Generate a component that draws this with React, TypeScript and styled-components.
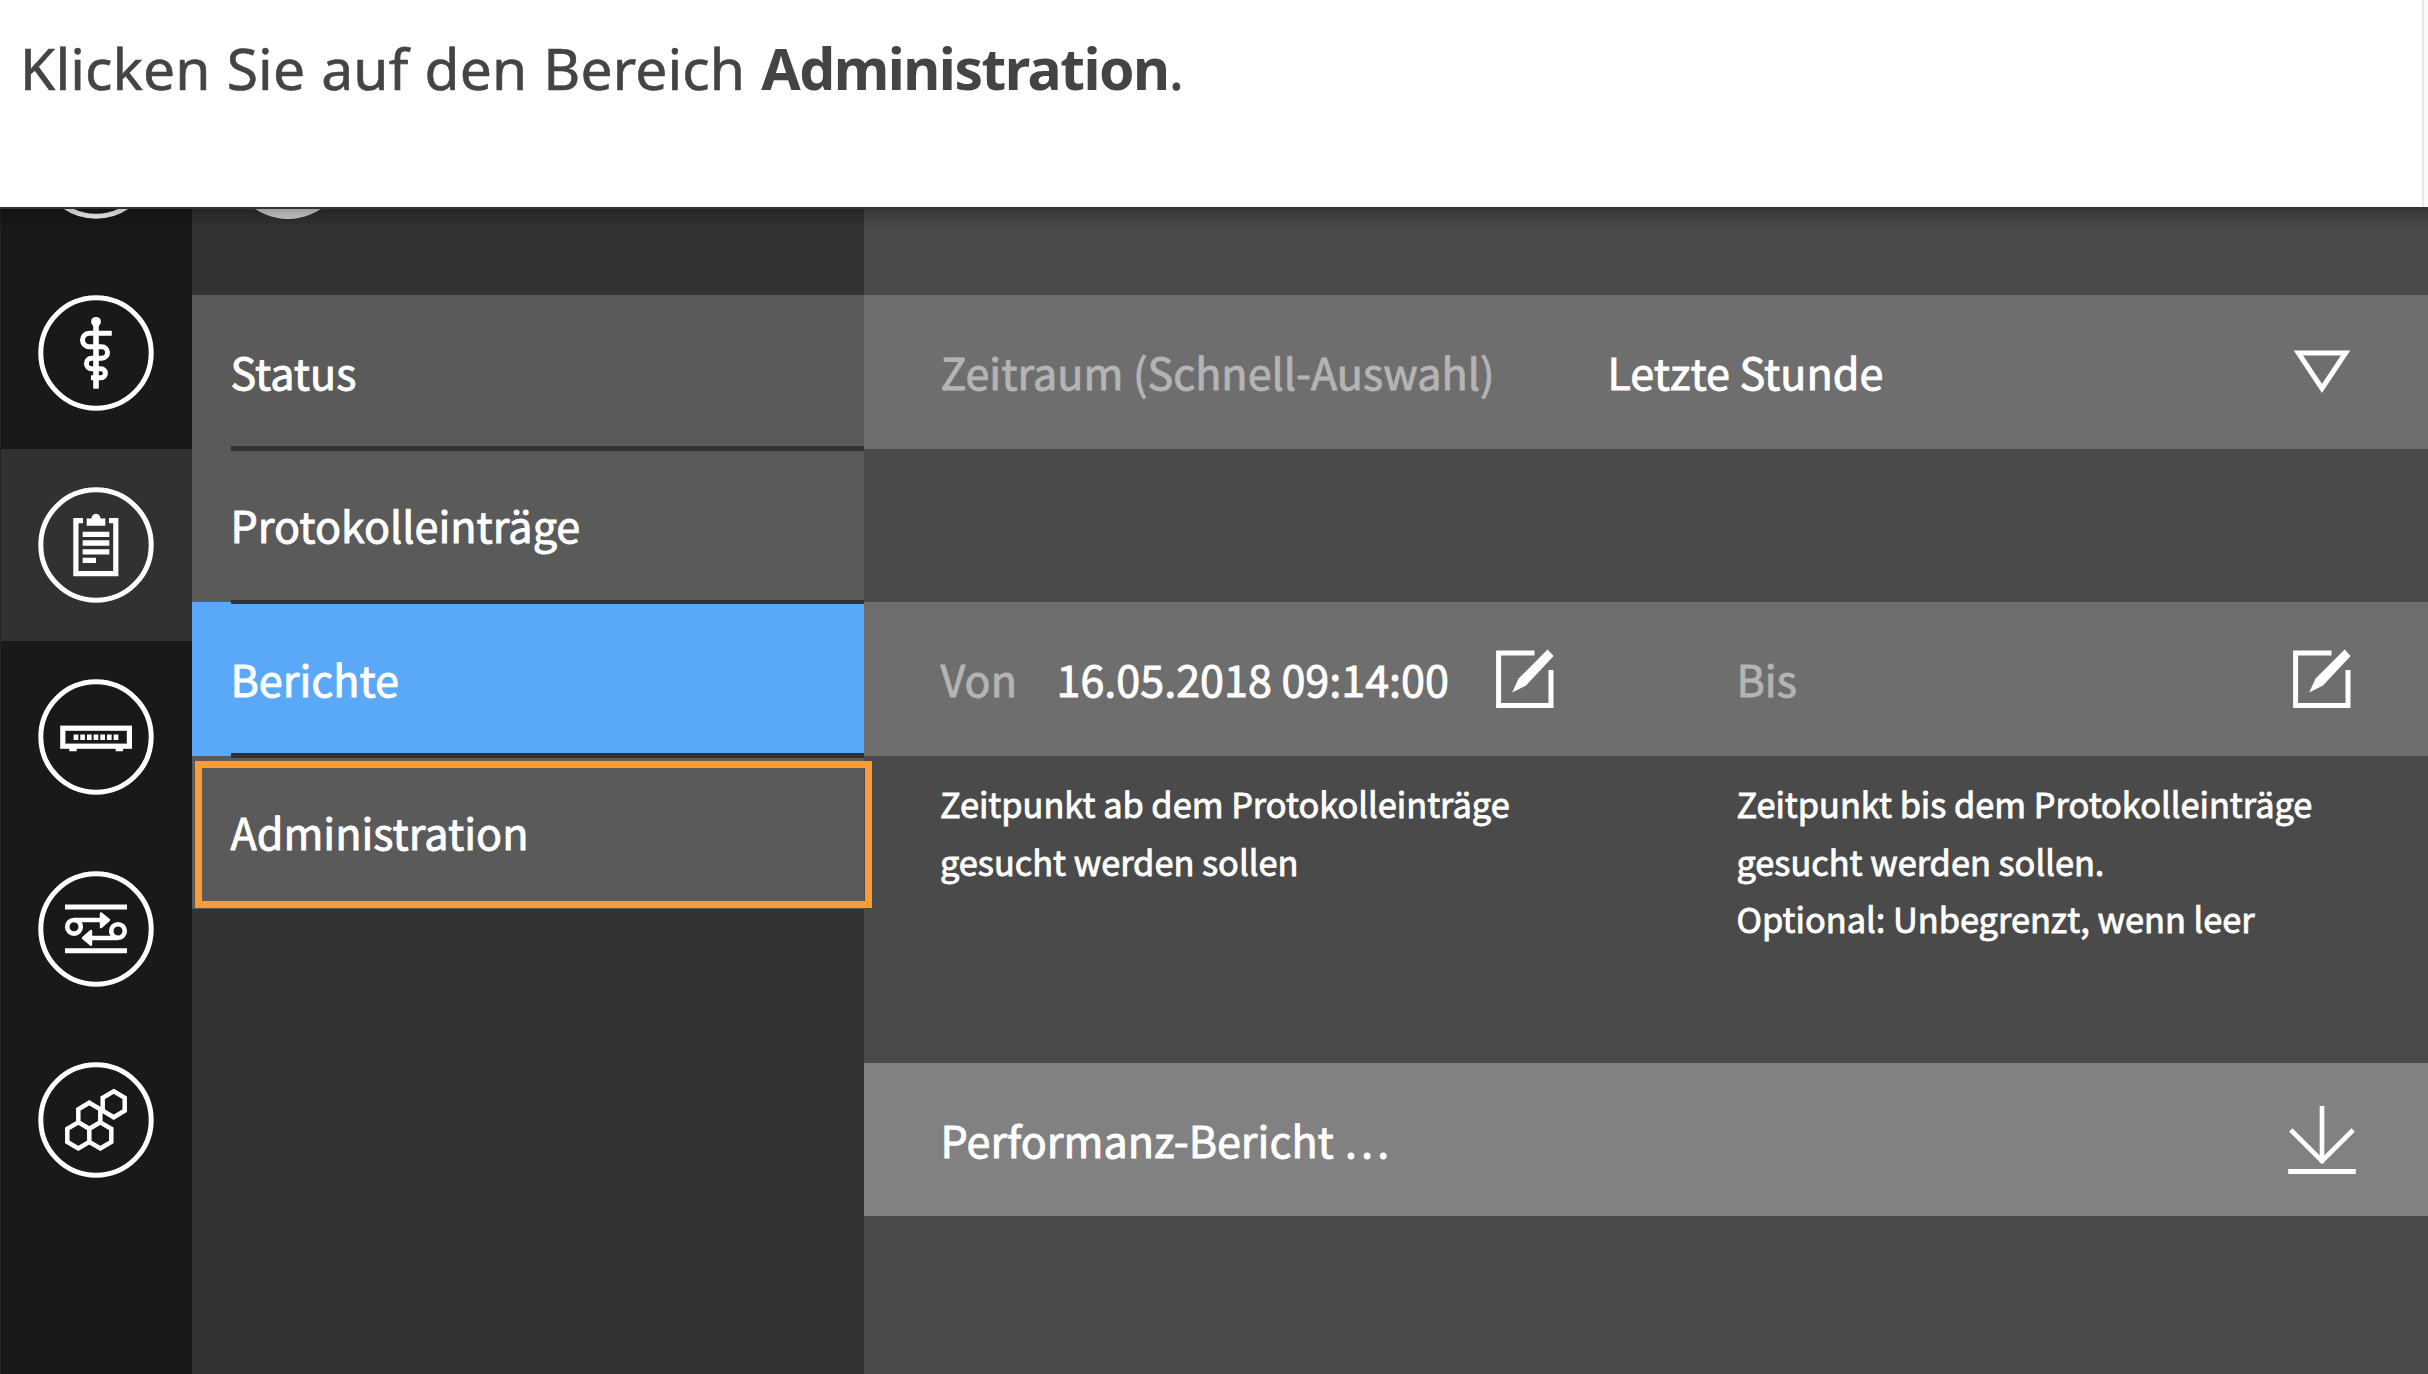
import React from "react";
import styled, { createGlobalStyle, css } from "styled-components";

const colors = {
  rail: "#191919",
  panel: "#323232",
  item: "#5a5a5a",
  active: "#5aa8f8",
  canvas: "#4a4a4a",
  row: "#6e6e6e",
  action: "#818181",
  muted: "#b4b4b4",
  marker: "#f99b37",
};

const GlobalStyle = createGlobalStyle`
  *, *::before, *::after { box-sizing: border-box; }
  body { margin: 0; background: #fff; overflow: hidden; }
`;

const Page = styled.div`
  width: 2428px;
  height: 1374px;
  display: flex;
  flex-direction: column;
  overflow: hidden;
`;

const Header = styled.header`
  display: flex;
  height: 207px;
  flex: none;
  background: #fafafa;
`;

const Instruction = styled.h1`
  margin: 0;
  width: 2424px;
  padding: 29px 0 0 20px;
  border-right: 2px solid #e6e6e6;
  background: #fff;
  color: #444;
  font: 400 57px/78px "Noto Sans", "Open Sans", sans-serif;
  letter-spacing: 0.1px;
  word-spacing: 1.2px;
  white-space: nowrap;
  -webkit-text-stroke: 0.6px currentColor;

  strong {
    font-weight: 700;
    letter-spacing: -1.5px;
    -webkit-text-stroke: 0;
  }
`;

const Stage = styled.main`
  position: relative;
  flex: 1;
  min-height: 0;
  display: grid;
  grid-template-columns: 192px 671.5px 1fr;
  border-top: 2px solid #333;
  background: ${colors.canvas};
  color: #fff;
  font-family: "Noto Sans CJK SC", "Open Sans", sans-serif;
  overflow: hidden;

  &::after {
    content: "";
    position: absolute;
    inset: 0 0 auto 0;
    height: 20px;
    background: linear-gradient(rgba(0, 0, 0, 0.25), rgba(0, 0, 0, 0));
  }
`;

const Rail = styled.nav`
  background: ${colors.rail};
  border-left: 1px solid #232323;
  min-height: 0;
  overflow: hidden;
  display: flex;
  flex-direction: column;
`;

const RailItem = styled.div<{ $active?: boolean; $clipped?: boolean }>`
  flex: none;
  height: ${(p) => (p.$clipped ? 48.3 : 191.8)}px;
  margin-left: -1px;
  display: flex;
  justify-content: center;
  align-items: ${(p) => (p.$clipped ? "flex-end" : "center")};
  overflow: hidden;
  background: ${(p) => (p.$active ? "#313131" : "transparent")};
  padding-bottom: ${(p) => (p.$clipped ? 35.9 : 0)}px;
`;

const Glyph = styled.svg`
  display: block;
  flex: none;
  fill: none;
  stroke: #fff;
`;

const Side = styled.aside`
  background: ${colors.panel};
  min-height: 0;
`;

const SideHead = styled.div`
  height: 86.3px;
  padding-left: 38px;
  overflow: hidden;
  display: flex;
  align-items: flex-start;
`;

const Avatar = styled.div`
  flex: none;
  width: 115.6px;
  height: 115.6px;
  border-radius: 50%;
  background: #d6d6d6;
  margin-top: -105.6px;
`;

const label = css`
  font-size: 43.1px;
  line-height: 62px;
  white-space: nowrap;
  -webkit-text-stroke: 0.9px currentColor;
`;

const MenuItem = styled.div<{ $active?: boolean; $last?: boolean }>`
  ${label}
  position: relative;
  height: 153.5px;
  padding: 0 0 3px 38.5px;
  display: flex;
  align-items: center;
  background: ${(p) => (p.$active ? colors.active : colors.item)};

  &::after {
    content: "";
    display: ${(p) => (p.$last ? "none" : "block")};
    position: absolute;
    z-index: 1;
    left: 38.5px;
    right: 0;
    bottom: -2px;
    height: 4.6px;
    background: ${colors.panel};
  }
`;

const Marker = styled.div`
  position: absolute;
  z-index: 2;
  left: 2.600px;
  top: 5.5px;
  width: 677px;
  height: 147px;
  border: 7.4px solid ${colors.marker};
`;

const Content = styled.section`
  display: flex;
  flex-direction: column;
  padding-top: 86.3px;
`;

const Row = styled.div<{ $tone: "row" | "action" | "none" }>`
  ${label}
  flex: none;
  height: 153.5px;
  padding: 0 77px 0 77px;
  display: flex;
  align-items: center;
  background: ${(p) => (p.$tone === "none" ? "transparent" : colors[p.$tone])};
`;

const Field = styled.div<{ $width?: number }>`
  width: ${(p) => (p.$width ? `${p.$width}px` : "auto")};
  flex: ${(p) => (p.$width ? "none" : 1)};
  display: flex;
  align-items: center;
`;

const Caption = styled.span<{ $width?: number }>`
  color: ${colors.muted};
  flex: none;
  padding-bottom: 2px;
  width: ${(p) => (p.$width ? `${p.$width}px` : "auto")};
`;

const Value = styled.span<{ $width?: number }>`
  padding-bottom: 2px;
  width: ${(p) => (p.$width ? `${p.$width}px` : "auto")};
`;

const End = styled.div<{ $inset?: number }>`
  margin-left: auto;
  margin-right: ${(p) => p.$inset ?? 0}px;
`;

const Hints = styled.div`
  flex: none;
  height: 307px;
  padding: 19.5px 0 0 76.5px;
  display: grid;
  grid-template-columns: 796.5px 1fr;
`;

const Hint = styled.p`
  margin: 0;
  font-size: 34.35px;
  line-height: 57.5px;
  white-space: nowrap;
  -webkit-text-stroke: 0.9px currentColor;
`;

const hexPath = (x: number, y: number) => {
  const w = 11;
  const r = 13;
  return `M${x} ${y - r}L${x + w} ${y - r / 2}V${y + r / 2}L${x} ${y + r}L${x - w} ${y + r / 2}V${y - r / 2}Z`;
};

const RoundIcon = ({ children }: { children?: React.ReactNode }) => (
  <Glyph width="120" height="120" viewBox="-60 -60 120 120">
    <circle r="55.2" strokeWidth="5" />
    {children}
  </Glyph>
);

const StaffIcon = () => (
  <RoundIcon>
    <circle cy="-31.2" r="4.9" fill="#fff" stroke="none" />
    <path d="M0 -31V35.7" strokeWidth="5.6" />
    <path
      d="M15.8 -19.7H-6.8a6.7 6.7 0 0 0 0 13.4H5.7a5.8 5.8 0 0 1 0 11.6H-4.4a5.2 5.2 0 0 0 0 10.4H4.9a4.5 4.5 0 0 1 0 9H-5"
      strokeWidth="5"
    />
  </RoundIcon>
);

const ClipboardIcon = () => (
  <RoundIcon>
    <path d="M-13 -24.3H-20.1V28.7H19.8V-24.3H13" strokeWidth="5.2" />
    <path d="M-9.3 -26.5H-4.6C-4.2 -29.6 -2.4 -31.3 0 -31.3S4.2 -29.6 4.6 -26.5H9.3V-19.3H-9.3Z" fill="#fff" stroke="none" />
    <path d="M-13.3 -10.7H13.3M-13.3 -2H13.3M-13.3 6.8H13.3M-13.3 15.4H0" strokeWidth="5.3" />
  </RoundIcon>
);

const DeviceIcon = () => (
  <RoundIcon>
    <rect x="-33.2" y="-8.8" width="66.6" height="18" strokeWidth="5.2" />
    <path d="M-22.4 0.2H23" strokeWidth="5.6" strokeDasharray="4.7 1.97" />
    <path d="M-26.7 12.4H-19.3M19.7 12.4H27.1" strokeWidth="3.6" />
  </RoundIcon>
);

const RoutesIcon = () => (
  <RoundIcon>
    <path d="M-31 -22H31M-31 21.8H31" strokeWidth="5" />
    <circle cx="-22" cy="-2.2" r="6.8" strokeWidth="4.6" />
    <circle cx="22" cy="2" r="6.8" strokeWidth="4.6" />
    <path d="M-22 -9H6M22 9H-6" strokeWidth="4.6" />
    <path d="M5 -15.6L13 -9L5 -1.8ZM-5 15.8L-13 9L-5 2Z" fill="#fff" strokeWidth="2.4" strokeLinejoin="round" />
  </RoundIcon>
);

const CellsIcon = () => (
  <RoundIcon>
    <path d={hexPath(17.7, -15.7) + hexPath(-6.7, -4.3) + hexPath(-17.7, 15.4) + hexPath(4.3, 15.4)} strokeWidth="4.5" />
  </RoundIcon>
);

const EditIcon = () => (
  <Glyph width="60" height="60" viewBox="0 0 60 60">
    <path d="M39.5 4H3.6V56.6H56V21" strokeWidth="5" />
    <path d="M52.6 0.4L58.6 7L31 36.4L17.2 43.6L23.6 29.6Z" fill="#fff" stroke="none" />
  </Glyph>
);

const TriangleIcon = () => (
  <Glyph width="58" height="46" viewBox="0 0 58 46">
    <path d="M5.4 4H52.6L29 39.4Z" strokeWidth="5" />
  </Glyph>
);

const DownloadIcon = () => (
  <Glyph width="70" height="72" viewBox="0 0 70 72">
    <path d="M35 2V59M3.8 26L35 57L66.2 26" strokeWidth="4.6" />
    <path d="M1.2 67.4H68.8" strokeWidth="5" />
  </Glyph>
);

const menu = ["Status", "Protokolleinträge", "Berichte", "Administration"];

export default function App() {
  return (
    <Page>
      <GlobalStyle />
      <Header>
        <Instruction>
          Klicken Sie auf den Bereich <strong>Administration</strong>.
        </Instruction>
      </Header>
      <Stage>
        <Rail>
          <RailItem $clipped>
            <RoundIcon />
          </RailItem>
          <RailItem>
            <StaffIcon />
          </RailItem>
          <RailItem $active>
            <ClipboardIcon />
          </RailItem>
          <RailItem>
            <DeviceIcon />
          </RailItem>
          <RailItem>
            <RoutesIcon />
          </RailItem>
          <RailItem>
            <CellsIcon />
          </RailItem>
        </Rail>
        <Side>
          <SideHead>
            <Avatar />
          </SideHead>
          {menu.map((name) => (
            <MenuItem key={name} $active={name === "Berichte"} $last={name === "Administration"}>
              {name}
              {name === "Administration" && <Marker />}
            </MenuItem>
          ))}
        </Side>
        <Content>
          <Row $tone="row">
            <Caption $width={667}>Zeitraum (Schnell-Auswahl)</Caption>
            <Value>Letzte Stunde</Value>
            <End>
              <TriangleIcon />
            </End>
          </Row>
          <Row $tone="none" />
          <Row $tone="row">
            <Field $width={796}>
              <Caption $width={116}>Von</Caption>
              <Value $width={438.5}>16.05.2018 09:14:00</Value>
              <EditIcon />
            </Field>
            <Field>
              <Caption>Bis</Caption>
              <End $inset={-1}>
                <EditIcon />
              </End>
            </Field>
          </Row>
          <Hints>
            <Hint>
              Zeitpunkt ab dem Protokolleinträge
              <br />
              gesucht werden sollen
            </Hint>
            <Hint>
              Zeitpunkt bis dem Protokolleinträge
              <br />
              gesucht werden sollen.
              <br />
              Optional: Unbegrenzt, wenn leer
            </Hint>
          </Hints>
          <Row $tone="action">
            <Value>Performanz-Bericht …</Value>
            <End $inset={-6}>
              <DownloadIcon />
            </End>
          </Row>
        </Content>
      </Stage>
    </Page>
  );
}
